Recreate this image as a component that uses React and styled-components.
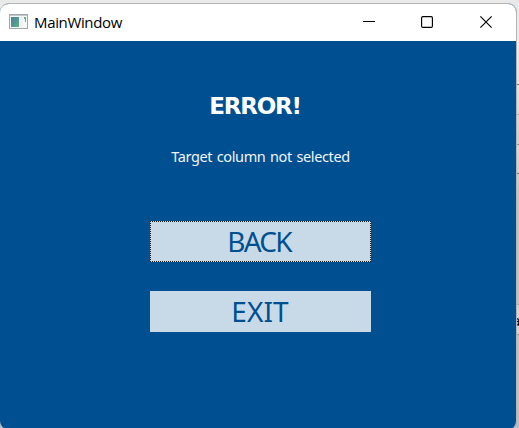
import React from "react";
import styled, { createGlobalStyle } from "styled-components";

const GlobalStyle = createGlobalStyle`
  * { box-sizing: border-box; }
  body { margin: 0; overflow: hidden; background: #c3c3c5; }
`;

const Desktop = styled.div`
  position: relative;
  width: 519px;
  height: 428px;
  padding-top: 3px;
  overflow: hidden;
  background: linear-gradient(#e9e9e9 0, #ededed 40px, #e2e2e2 84px, #cfcfd0 140px, #d8d8da 150px, #c3c3c5 200px, #bfc0c3 400px, #b3bdc7 428px);
`;

const Behind = styled.div`
  position: absolute;
  left: 516px;
  top: ${(p) => p.$top}px;
  width: 3px;
  height: ${(p) => p.$height || 1}px;
  background: ${(p) => p.$color};
`;

const BehindText = styled.span`
  position: absolute;
  left: 512px;
  top: 310px;
  font: 15px/20px "Noto Sans", sans-serif;
  color: #111;
`;

const Window = styled.main`
  position: relative;
  display: flex;
  flex-direction: column;
  width: 517px;
  height: 426px;
  border: 1px solid #b5b5b5;
  border-left: 0;
  border-bottom: 0;
  border-radius: 9px 9px 8px 8px;
  overflow: hidden;
  background: #004f91;
  font-family: "Noto Sans", sans-serif;
`;

const TitleBar = styled.header`
  display: flex;
  align-items: center;
  flex: 0 0 37px;
  padding-left: 9px;
  background: #fff;
`;

const Title = styled.span`
  flex: 1;
  margin-left: 6px;
  padding-bottom: 2px;
  font: 15px/20px "Open Sans", sans-serif;
  letter-spacing: -0.35px;
  color: #000;
`;

const Controls = styled.div`
  display: flex;
  gap: 47px;
  margin: 0 24px 2px 0;
`;

const Control = styled.svg`
  display: block;
  width: 12px;
  height: 12px;
  overflow: visible;
  fill: none;
  stroke: #000;
  stroke-width: 1.15;
`;

const AppIcon = styled.svg`
  display: block;
  width: 19px;
  height: 16px;
  margin-bottom: 1px;
`;

const Content = styled.section`
  display: flex;
  flex-direction: column;
  align-items: center;
  width: 520px;
  padding-top: 49px;
`;

const Heading = styled.h1`
  margin: 0 10px 0 0;
  font-family: "DejaVu Sans", sans-serif;
  font-size: 23px;
  line-height: 32px;
  font-weight: 700;
  letter-spacing: -1.2px;
  color: #fff;
`;

const Message = styled.p`
  margin: 23px 0 54px 1px;
  font-size: 14.5px;
  line-height: 22px;
  letter-spacing: -0.38px;
  word-spacing: 1.2px;
  white-space: nowrap;
  color: #f0f5f9;
`;

const Action = styled.button`
  display: flex;
  align-items: center;
  justify-content: center;
  width: 221px;
  height: 41px;
  margin: 0 0 29px 1px;
  padding: 0 ${(p) => p.$inset}px 2px 0;
  border: 0;
  outline: ${(p) => (p.$focused ? "1px dotted #201c18" : "none")};
  outline-offset: -1px;
  background: #c8dae8;
  color: #004f91;
  font: 28px/38px "Noto Sans", sans-serif;
  letter-spacing: ${(p) => p.$spacing}px;
`;

export default function App() {
  return (
    <Desktop>
      <GlobalStyle />
      <Behind $top={84} $color="#777" />
      <Behind $top={114} $color="#aaa" />
      <Behind $top={144} $color="#999" />
      <Behind $top={173} $color="#777" />
      <Behind $top={304} $height={30} $color="#d4d4d6" />
      <Behind $top={304} $color="#aaa" />
      <Behind $top={334} $color="#999" />
      <BehindText>a</BehindText>
      <Window>
        <TitleBar>
          <AppIcon viewBox="0 0 19 16">
            <defs>
              <linearGradient id="pane" x1="0" y1="0" x2="1" y2="1">
                <stop offset="0" stopColor="#477fa0" />
                <stop offset="1" stopColor="#62ad83" />
              </linearGradient>
            </defs>
            <rect x=".5" y=".5" width="18" height="14" fill="#f7f8f8" stroke="#a2a6aa" />
            <path d="M1 1.5H18" stroke="#c3c7cb" />
            <rect x="2" y="3" width="8" height="10" fill="url(#pane)" />
            <rect x="11" y="3" width="3" height="10" fill="#eef1f3" />
            <path d="M15 3h2v5h-1V5h-1z" fill="#66a98e" />
          </AppIcon>
          <Title>MainWindow</Title>
          <Controls>
            <Control viewBox="0 0 12 12"><path d="M1 5.5H13" /></Control>
            <Control viewBox="0 0 12 12"><rect x=".6" y=".6" width="10.8" height="10.8" rx="1.2" /></Control>
            <Control viewBox="0 0 12 12"><path d="M.4 .4L11.6 11.6M11.6 .4L.4 11.6" /></Control>
          </Controls>
        </TitleBar>
        <Content>
          <Heading>ERROR!</Heading>
          <Message>Target column not selected</Message>
          <Action $focused $inset={3} $spacing={-1.8}>BACK</Action>
          <Action $inset={1} $spacing={0.1}>EXIT</Action>
        </Content>
      </Window>
    </Desktop>
  );
}
